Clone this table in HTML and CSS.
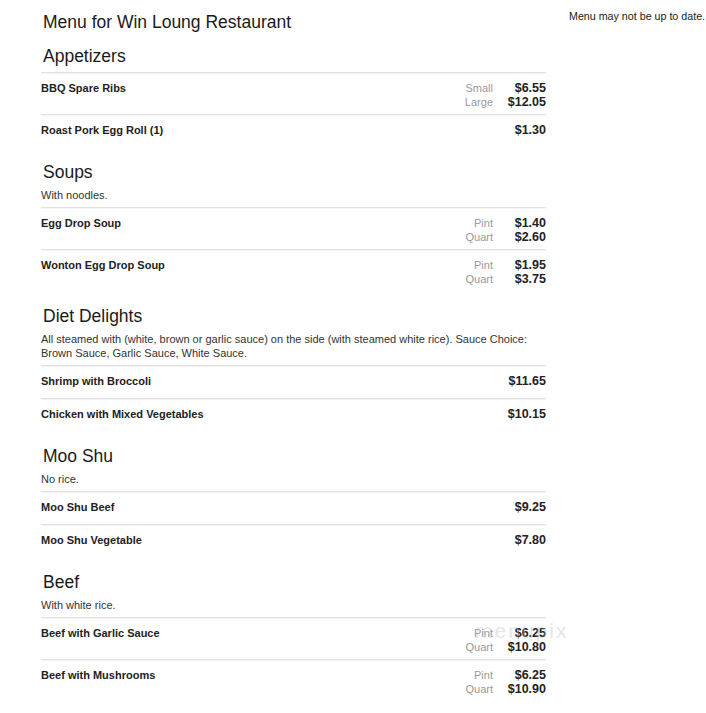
FILE: index.html
```html
<!DOCTYPE html>
<html>
<head>
<meta charset="utf-8">
<title>Menu for Win Loung Restaurant</title>
<link rel="stylesheet" href="styles.css">
</head>
<body>
<div class="page">
  <main class="menu">
    <h1 class="title">Menu for Win Loung Restaurant</h1>

    <section class="section">
      <h2 class="heading">Appetizers</h2>
      <div class="row">
        <div class="name">BBQ Spare Ribs</div>
        <div class="prices">
          <div class="line"><span class="size">Small</span><span class="price">$6.55</span></div>
          <div class="line"><span class="size">Large</span><span class="price">$12.05</span></div>
        </div>
      </div>
      <div class="row">
        <div class="name">Roast Pork Egg Roll (1)</div>
        <div class="prices">
          <div class="line"><span class="price">$1.30</span></div>
        </div>
      </div>
    </section>

    <section class="section">
      <h2 class="heading">Soups</h2>
      <p class="desc">With noodles.</p>
      <div class="row">
        <div class="name">Egg Drop Soup</div>
        <div class="prices">
          <div class="line"><span class="size">Pint</span><span class="price">$1.40</span></div>
          <div class="line"><span class="size">Quart</span><span class="price">$2.60</span></div>
        </div>
      </div>
      <div class="row">
        <div class="name">Wonton Egg Drop Soup</div>
        <div class="prices">
          <div class="line"><span class="size">Pint</span><span class="price">$1.95</span></div>
          <div class="line"><span class="size">Quart</span><span class="price">$3.75</span></div>
        </div>
      </div>
    </section>

    <section class="section">
      <h2 class="heading">Diet Delights</h2>
      <p class="desc">All steamed with (white, brown or garlic sauce) on the side (with steamed white rice). Sauce Choice: Brown Sauce, Garlic Sauce, White Sauce.</p>
      <div class="row">
        <div class="name">Shrimp with Broccoli</div>
        <div class="prices">
          <div class="line"><span class="price">$11.65</span></div>
        </div>
      </div>
      <div class="row">
        <div class="name">Chicken with Mixed Vegetables</div>
        <div class="prices">
          <div class="line"><span class="price">$10.15</span></div>
        </div>
      </div>
    </section>

    <section class="section">
      <h2 class="heading">Moo Shu</h2>
      <p class="desc">No rice.</p>
      <div class="row">
        <div class="name">Moo Shu Beef</div>
        <div class="prices">
          <div class="line"><span class="price">$9.25</span></div>
        </div>
      </div>
      <div class="row">
        <div class="name">Moo Shu Vegetable</div>
        <div class="prices">
          <div class="line"><span class="price">$7.80</span></div>
        </div>
      </div>
    </section>

    <section class="section">
      <h2 class="heading">Beef</h2>
      <p class="desc">With white rice.</p>
      <div class="row">
        <div class="name">Beef with Garlic Sauce</div>
        <div class="prices">
          <div class="line"><span class="size">Pint</span><span class="price">$6.25</span></div>
          <div class="line"><span class="size">Quart</span><span class="price">$10.80</span></div>
        </div>
        <span class="watermark">menupix</span>
      </div>
      <div class="row">
        <div class="name">Beef with Mushrooms</div>
        <div class="prices">
          <div class="line"><span class="size">Pint</span><span class="price">$6.25</span></div>
          <div class="line"><span class="size">Quart</span><span class="price">$10.90</span></div>
        </div>
      </div>
    </section>
  </main>
  <aside class="note">Menu may not be up to date.</aside>
</div>
</body>
</html>
```

FILE: styles.css
```css
html, body {
  margin: 0;
  padding: 0;
  background: #fff;
}

body {
  font-family: "Liberation Sans", Arial, sans-serif;
  color: #222;
}

.page {
  display: flex;
  align-items: flex-start;
  padding-left: 41px;
}

.menu {
  flex: 0 0 505px;
  width: 505px;
  padding-top: 12px;
}

.title {
  margin: 0 0 14px 2px;
  font-size: 17.5px;
  line-height: 20px;
  font-weight: normal;
  color: #1a1a1a;
}

.section {
  margin-bottom: 15px;
}

.heading {
  margin: 0 0 6px 2px;
  font-size: 17.5px;
  line-height: 20px;
  font-weight: normal;
  color: #1a1a1a;
}

.desc {
  margin: 0 0 5px;
  font-size: 11px;
  line-height: 14px;
  color: #333;
}

.row {
  position: relative;
  display: flex;
  justify-content: space-between;
  align-items: flex-start;
  border-top: 1px solid #e2e2e2;
  box-shadow: inset 0 1px 0 #f4f4f4;
  padding: 8px 0 5px;
  min-height: 19px;
}

.name {
  font-size: 11px;
  line-height: 14px;
  font-weight: bold;
  color: #222;
}

.prices {
  display: flex;
  flex-direction: column;
  align-items: flex-end;
}

.line {
  display: flex;
  align-items: baseline;
  line-height: 14px;
}

.size {
  font-size: 11px;
  color: #9a9a9a;
  margin-right: 8px;
}

.price {
  width: 45px;
  text-align: right;
  font-size: 12.5px;
  font-weight: bold;
  color: #222;
}

.watermark {
  position: absolute;
  left: 434px;
  top: 1px;
  font-size: 21px;
  letter-spacing: 2px;
  color: rgba(190, 190, 190, 0.4);
  pointer-events: none;
}

.note {
  flex: 0 0 auto;
  margin-left: 23px;
  padding-top: 9px;
  font-size: 10.7px;
  line-height: 14px;
  color: #222;
  white-space: nowrap;
}
```
